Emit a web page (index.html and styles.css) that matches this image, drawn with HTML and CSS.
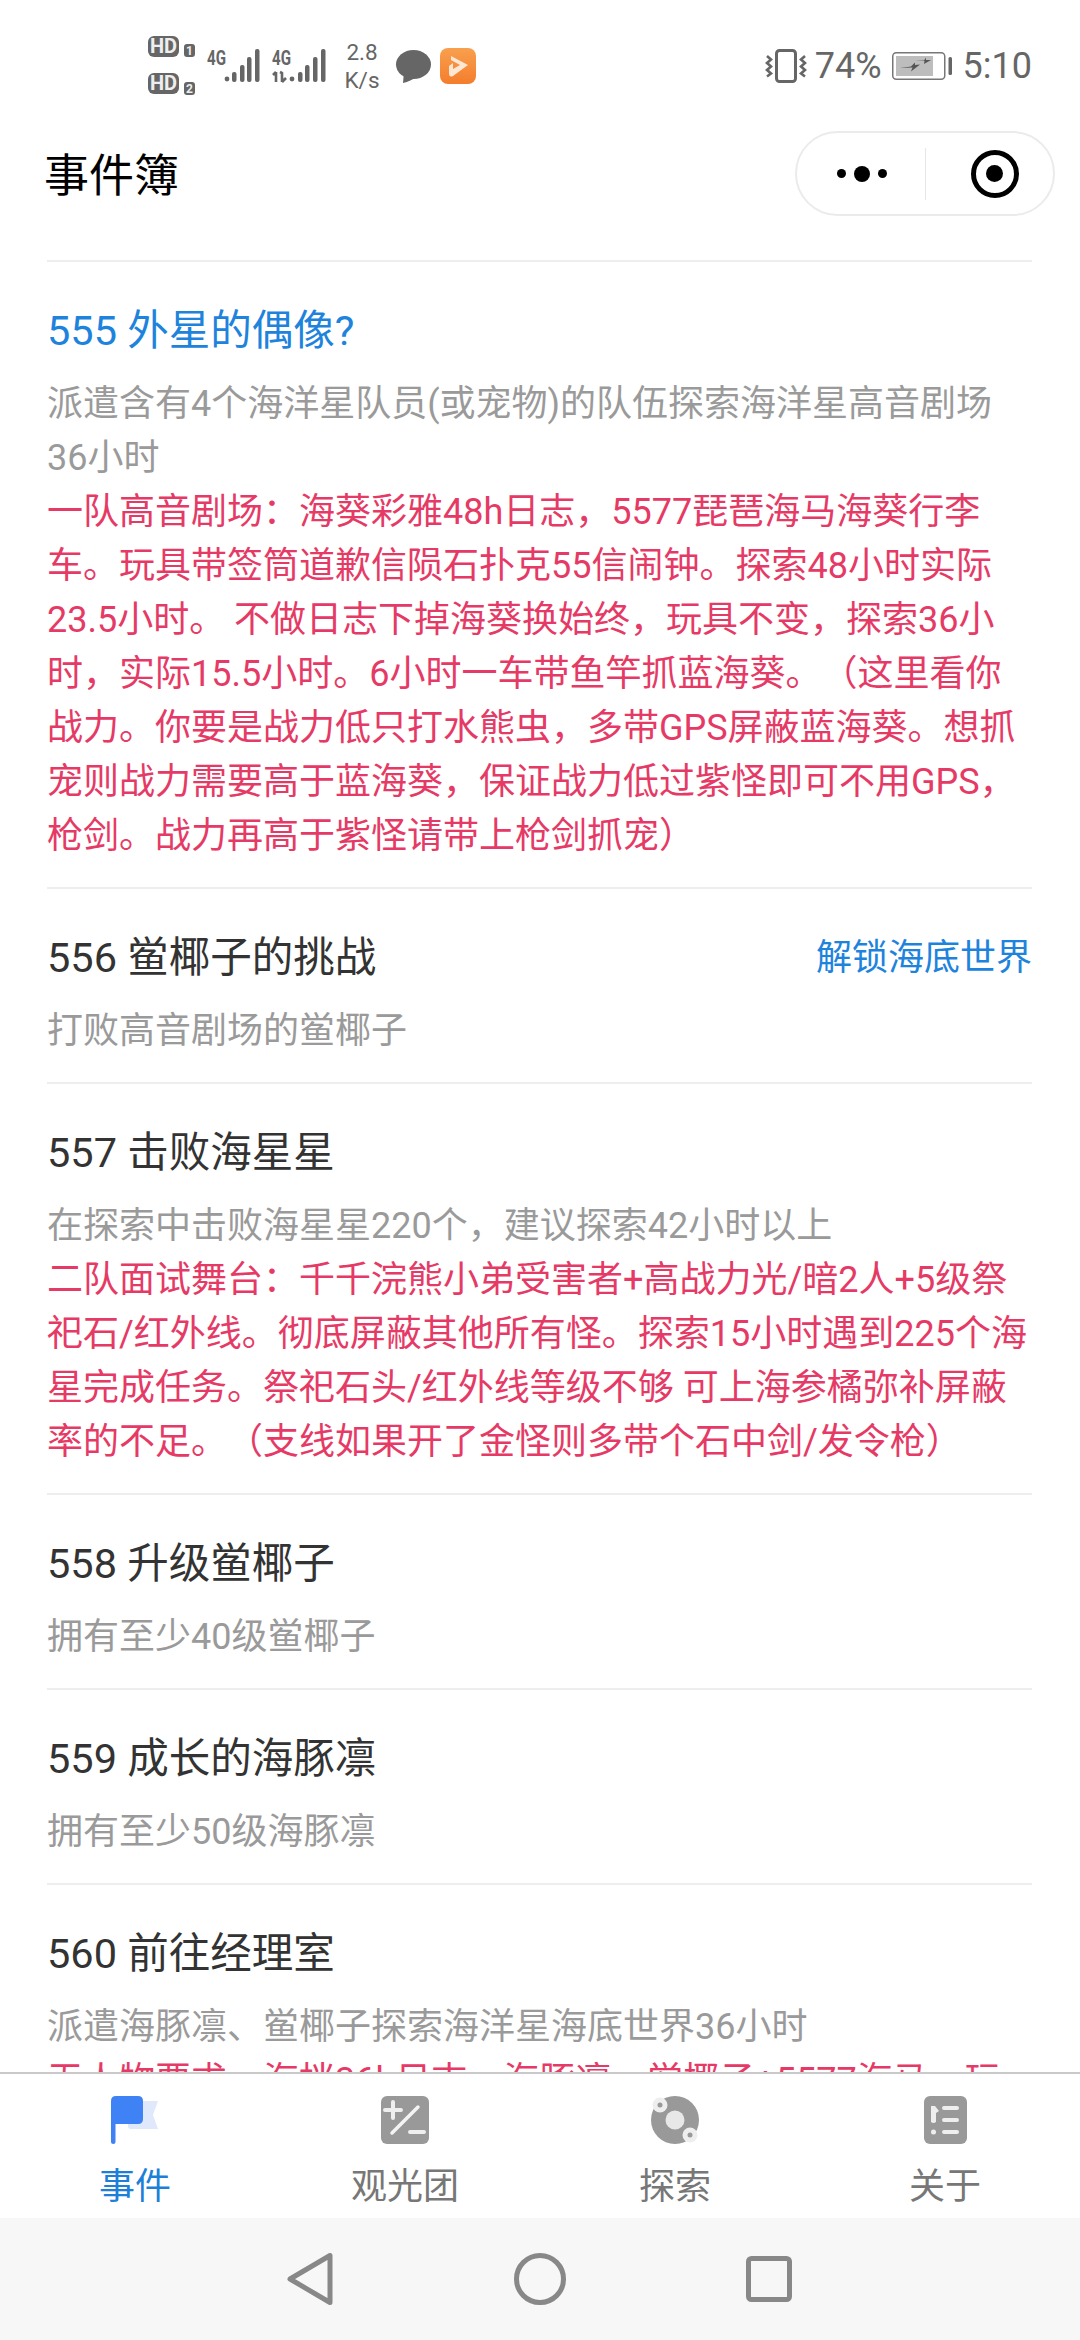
FILE: index.html
```html
<!DOCTYPE html>
<html lang="zh-CN">
<head>
<meta charset="utf-8">
<title>事件簿</title>
<link rel="stylesheet" href="styles.css">
</head>
<body>
<div class="screen">
  <header class="top">
    <div class="status">
      <div class="status-left">
        <svg class="ic-hd" width="47" height="60" viewBox="0 0 47 60">
          <rect x="0" y="0" width="31" height="21" rx="6" fill="#666"/>
          <text x="15.5" y="17" class="hd-text" text-anchor="middle">HD</text>
          <rect x="36" y="8" width="11" height="13" rx="3" fill="#666"/>
          <text x="41.5" y="18.5" class="hd-num" text-anchor="middle">1</text>
          <rect x="0" y="37" width="31" height="21" rx="6" fill="#666"/>
          <text x="15.5" y="54" class="hd-text" text-anchor="middle">HD</text>
          <rect x="36" y="46" width="11" height="13" rx="3" fill="#666"/>
          <text x="41.5" y="56.5" class="hd-num" text-anchor="middle">2</text>
        </svg>
        <svg class="ic-sig1" width="53" height="34" viewBox="0 0 53 34">
          <text x="0" y="16" class="sig-text" textLength="19" lengthAdjust="spacingAndGlyphs">4G</text>
          <circle cx="20" cy="30" r="2.4" fill="#666"/>
          <rect x="25" y="23" width="4.5" height="10" rx="2" fill="#666"/>
          <rect x="33" y="16" width="4.5" height="17" rx="2" fill="#666"/>
          <rect x="40" y="8" width="4.5" height="25" rx="2" fill="#666"/>
          <rect x="48" y="0" width="4.5" height="33" rx="2" fill="#666"/>
        </svg>
        <svg class="ic-sig2" width="53" height="34" viewBox="0 0 53 34">
          <text x="0" y="16" class="sig-text" textLength="19" lengthAdjust="spacingAndGlyphs">4G</text>
          <path d="M4 33V23M1 26l3-3M8 23l2 1V33M10 33l4-4" stroke="#666" stroke-width="2.600" fill="none"/>
          <circle cx="20" cy="30" r="2.4" fill="#666"/>
          <rect x="26" y="23" width="4.5" height="10" rx="2" fill="#666"/>
          <rect x="33" y="16" width="4.5" height="17" rx="2" fill="#666"/>
          <rect x="41" y="8" width="4.5" height="25" rx="2" fill="#666"/>
          <rect x="49" y="0" width="4.5" height="33" rx="2" fill="#666"/>
        </svg>
        <div class="speed"><span>2.8</span><span>K/s</span></div>
        <svg class="ic-bubble" width="35" height="33" viewBox="0 0 35 33">
          <ellipse cx="17.500" cy="14.500" rx="17.500" ry="14.500" fill="#666"/>
          <path d="M8 22 L7 33 Q15 31 20 27Z" fill="#666"/>
        </svg>
        <svg class="ic-app" width="36" height="36" viewBox="0 0 36 36">
          <defs><linearGradient id="appg" x1="0" y1="0" x2="0" y2="1"><stop offset="0" stop-color="#f8a04e"/><stop offset="1" stop-color="#f47d2c"/></linearGradient></defs>
          <rect width="36" height="36" rx="8" fill="url(#appg)"/>
          <path d="M11 8 L28 17 L13 28 Q9 30 9 25 V18 L13 15 V21 L20 17 L11 12Z" fill="#fde6d2"/>
        </svg>
      </div>
      <div class="status-right">
        <svg class="ic-vib" width="42" height="34" viewBox="0 0 42 34">
          <rect x="11.5" y="1.5" width="19" height="31" rx="3" fill="none" stroke="#666" stroke-width="3"/>
          <path d="M2 7l4 3.500-4 3.500 4 3.500-4 3.500 4 3.500-4 3" fill="none" stroke="#666" stroke-width="2.600"/>
          <path d="M40 7l-4 3.500 4 3.500-4 3.500 4 3.500-4 3.500 4 3" fill="none" stroke="#666" stroke-width="2.600"/>
        </svg>
        <span class="st-text pct">74%</span>
        <svg class="ic-batt" width="60" height="28" viewBox="0 0 60 28">
          <rect x="0.750" y="0.750" width="52" height="26.500" rx="3.500" fill="none" stroke="#777" stroke-width="1.500"/>
          <rect x="4" y="4" width="37" height="20" fill="#bdbdbd"/>
          <rect x="56.500" y="5" width="3.500" height="18" rx="1.500" fill="#666"/>
          <path d="M8 16l11-1.500 4-4 0 2.500 5-.5-9 7 1.500-4zM23 9l9-.5 2-3 0 2.500 5 0-7 4 .5-3z" fill="#555"/>
        </svg>
        <span class="st-text time">5:10</span>
      </div>
    </div>
    <div class="navbar">
      <h1 class="page-title">事件簿</h1>
      <div class="capsule">
        <div class="cap-left">
          <i class="dot"></i><i class="dot dot-big"></i><i class="dot"></i>
        </div>
        <div class="cap-divider"></div>
        <div class="cap-right"><span class="record"></span></div>
      </div>
    </div>
  </header>

  <main class="list">
    <section class="row">
      <div class="row-head"><h2 class="row-title active">555 外星的偶像?</h2></div>
      <p class="desc">派遣含有4个海洋星队员(或宠物)的队伍探索海洋星高音剧场<br>36小时</p>
      <p class="note">一队高音剧场：海葵彩雅48h日志，5577琵琶海马海葵行李车。玩具带签筒道歉信陨石扑克55信闹钟。探索48小时实际23.5小时。 不做日志下掉海葵换始终，玩具不变，探索36小时，实际15.5小时。6小时一车带鱼竿抓蓝海葵。（这里看你战力。你要是战力低只打水熊虫，多带GPS屏蔽蓝海葵。想抓宠则战力需要高于蓝海葵，保证战力低过紫怪即可不用GPS，枪剑。战力再高于紫怪请带上枪剑抓宠）</p>
    </section>
    <section class="row">
      <div class="row-head"><h2 class="row-title">556 鲎椰子的挑战</h2><span class="unlock">解锁海底世界</span></div>
      <p class="desc">打败高音剧场的鲎椰子</p>
    </section>
    <section class="row">
      <div class="row-head"><h2 class="row-title">557 击败海星星</h2></div>
      <p class="desc">在探索中击败海星星220个，建议探索42小时以上</p>
      <p class="note">二队面试舞台：千千浣熊小弟受害者+高战力光/暗2人+5级祭祀石/红外线。彻底屏蔽其他所有怪。探索15小时遇到225个海星完成任务。祭祀石头/红外线等级不够 可上海参橘弥补屏蔽率的不足。（支线如果开了金怪则多带个石中剑/发令枪）</p>
    </section>
    <section class="row">
      <div class="row-head"><h2 class="row-title">558 升级鲎椰子</h2></div>
      <p class="desc">拥有至少40级鲎椰子</p>
    </section>
    <section class="row">
      <div class="row-head"><h2 class="row-title">559 成长的海豚凛</h2></div>
      <p class="desc">拥有至少50级海豚凛</p>
    </section>
    <section class="row">
      <div class="row-head"><h2 class="row-title">560 前往经理室</h2></div>
      <p class="desc">派遣海豚凛、鲎椰子探索海洋星海底世界36小时</p>
      <p class="note">无人物要求，海拌36h日志，海豚凛、鲎椰子+5577海马，玩具带签筒道歉信陨石扑克</p>
    </section>
  </main>

  <nav class="tabbar">
    <div class="tab tab-on">
      <svg width="48" height="48" viewBox="0 0 48 48">
        <path d="M17 5H47L42 19L47 33H20Q17 33 17 30Z" fill="#dfe9fb"/>
        <path d="M5 0H27Q32 0 32 5V23Q32 28 27 28H4.500V46Q4.500 48 2.250 48Q0 48 0 46V5Q0 0 5 0Z" fill="#3f82f5"/>
      </svg>
      <span>事件</span>
    </div>
    <div class="tab">
      <svg width="48" height="48" viewBox="0 0 48 48">
        <rect width="48" height="48" rx="6" fill="#999"/>
        <path d="M4 14H20M12 6V22" stroke="#eee" stroke-width="4" stroke-linecap="round"/>
        <path d="M11 37L37 11" stroke="#f4f4f4" stroke-width="3.500" stroke-linecap="round"/>
        <path d="M29 36H43" stroke="#eee" stroke-width="4" stroke-linecap="round"/>
      </svg>
      <span>观光团</span>
    </div>
    <div class="tab">
      <svg width="48" height="48" viewBox="0 0 48 48">
        <circle cx="24" cy="24" r="24" fill="#999"/>
        <circle cx="24" cy="24" r="9.500" fill="#e8e8e8"/>
        <circle cx="9" cy="9" r="7.500" fill="#eee"/>
        <circle cx="9" cy="9" r="2.500" fill="#999"/>
        <circle cx="39" cy="39" r="7.500" fill="#eee"/>
        <circle cx="39" cy="39" r="2.500" fill="#999"/>
      </svg>
      <span>探索</span>
    </div>
    <div class="tab">
      <svg width="43" height="48" viewBox="0 0 43 48">
        <rect width="43" height="48" rx="6" fill="#999"/>
        <path d="M20 12H33M20 24H33M20 36H33" stroke="#eee" stroke-width="4" stroke-linecap="round"/>
        <path d="M7 10H11L15 15L12 17V26Q9.500 28 7 26Z" fill="#eee"/>
        <circle cx="9.500" cy="36" r="2.500" fill="#eee"/>
      </svg>
      <span>关于</span>
    </div>
  </nav>

  <footer class="sysnav">
    <svg width="46" height="52" viewBox="0 0 46 52"><path d="M3 26L43 2.500V49.500Z" fill="none" stroke="#888" stroke-width="5" stroke-linejoin="round"/></svg>
    <svg width="52" height="52" viewBox="0 0 52 52"><circle cx="26" cy="26" r="23.500" fill="none" stroke="#888" stroke-width="5"/></svg>
    <svg width="46" height="46" viewBox="0 0 46 46"><rect x="2.500" y="2.500" width="41" height="41" rx="3" fill="none" stroke="#888" stroke-width="5"/></svg>
  </footer>
</div>
</body>
</html>
```

FILE: styles.css
```css
* { box-sizing: border-box; }
html, body { margin: 0; padding: 0; background: #fff; }
body { font-family: "Roboto", "Noto Sans CJK SC", sans-serif; text-spacing-trim: space-all; }
.screen { width: 1080px; height: 2340px; display: flex; flex-direction: column; overflow: hidden; background: #fff; }

.top { flex: none; height: 260px; display: flex; flex-direction: column; }
.status { height: 132px; flex: none; display: flex; justify-content: space-between; align-items: center; padding: 0 48px 0 148px; color: #666; }
.status-left, .status-right { display: flex; align-items: center; }
.status svg { display: block; flex: none; overflow: visible; }
.ic-sig1 { margin-left: 12px; }
.ic-sig2 { margin-left: 12px; }
.hd-text { font: 700 20px "Roboto", sans-serif; fill: #eee; }
.hd-num { font: 700 12px "Roboto", sans-serif; fill: #eee; }
.sig-text { font: 700 21px "Roboto", sans-serif; fill: #666; }
.speed { margin-left: 19px; width: 36px; display: flex; flex-direction: column; align-items: center; font: 400 22.5px/28px "Roboto", sans-serif; color: #666; }
.ic-bubble { margin-left: 16px; }
.ic-app { margin-left: 9px; }
.st-text { font: 400 36px/40px "Roboto", sans-serif; color: #666; }
.pct { margin-left: 8px; }
.ic-batt { margin-left: 10px; }
.time { margin-left: 11px; }

.navbar { flex: 1; display: flex; justify-content: space-between; align-items: flex-start; padding: 0 25px 0 44px; }
.page-title { margin: 12px 0 0; font-family: "Noto Sans CJK SC", sans-serif; font-size: 45px; line-height: 58px; font-weight: 400; color: #000; }
.capsule { width: 260px; height: 85px; margin-top: -1px; display: flex; align-items: center; border: 2px solid #ebebeb; border-radius: 43px; background: #fff; }
.cap-left { width: 128px; height: 100%; display: flex; align-items: center; justify-content: flex-end; gap: 8px; padding-right: 38px; }
.dot { display: block; width: 9px; height: 9px; border-radius: 50%; background: #000; }
.dot-big { width: 16px; height: 16px; }
.cap-divider { width: 1px; height: 52px; background: #e6e6e6; }
.cap-right { flex: 1; display: flex; justify-content: center; align-items: center; padding-left: 10px; }
.record { display: flex; width: 48px; height: 48px; border-radius: 50%; border: 5.500px solid #000; align-items: center; justify-content: center; }
.record::after { content: ""; width: 17px; height: 17px; border-radius: 50%; background: #000; }

.list { flex: 1; min-height: 0; overflow: hidden; margin: 0 48px 0 47px; border-top: 2px solid #eee; }
.row { padding: 41px 0 24px; border-bottom: 2px solid #eee; }
.row-head { display: flex; justify-content: space-between; align-items: center; height: 56px; }
.row-title { margin: 0; font-size: 41.500px; line-height: 56px; font-weight: 400; color: #333; }
.row-title.active { color: #1e83dc; }
.unlock { font-size: 36px; line-height: 56px; color: #1e83dc; }
.desc { margin: 18px 0 0; font-size: 36px; line-height: 54px; color: #9a9a9a; }
.note { margin: 0; font-size: 36px; line-height: 54px; color: #e63a66; }

.tabbar { flex: none; height: 146px; display: grid; grid-template-columns: repeat(4, 1fr); border-top: 2px solid #c9c9c9; background: #fff; font-family: "Noto Sans CJK SC", sans-serif; }
.tab { display: flex; flex-direction: column; align-items: center; padding-top: 22px; color: #777; font-size: 36px; line-height: 48px; }
.tab svg { display: block; flex: none; }
.tab span { margin-top: 15px; }
.tab-on { color: #1e7fd8; }

.sysnav { flex: none; height: 122px; background: #f7f7f7; display: flex; align-items: center; padding: 0 288px 0 287px; justify-content: space-between; }
.sysnav svg { display: block; flex: none; }
```
